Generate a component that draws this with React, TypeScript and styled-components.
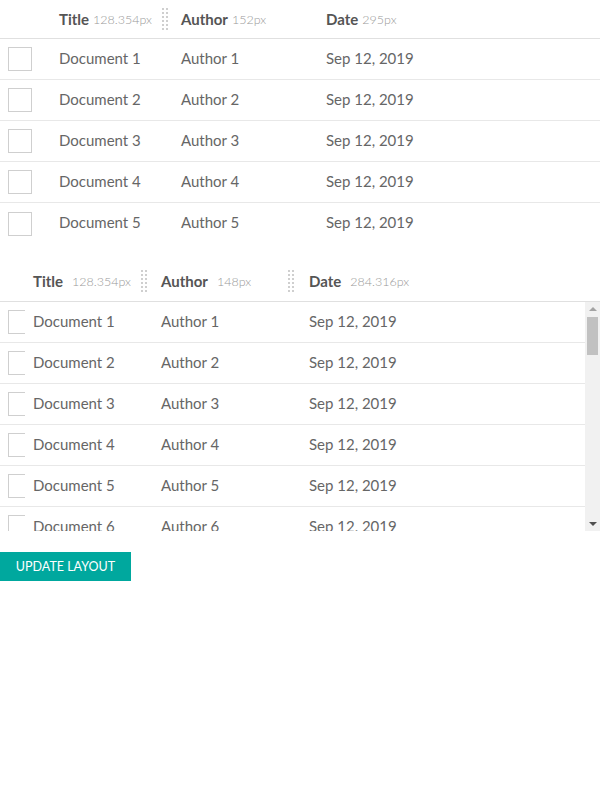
import React from "react";
import styled, { createGlobalStyle } from "styled-components";

const Global = createGlobalStyle`
  html, body { margin: 0; padding: 0; background: #fff; }
  body { font-family: "Lato", "Open Sans", sans-serif; color: #666; }
`;

const Table = styled.div`
  display: flex;
  flex-direction: column;
`;

const HeaderRow = styled.div<{ $cols: string; $h: number }>`
  display: grid;
  grid-template-columns: ${(p) => p.$cols};
  height: ${(p) => p.$h}px;
  align-items: center;
  border-bottom: 1px solid #e0e0e0;
`;

const HeaderCell = styled.div<{ $pr?: number; $gap: number }>`
  display: flex;
  align-items: center;
  height: 100%;
  padding-right: ${(p) => p.$pr ?? 0}px;
  box-sizing: border-box;
  gap: ${(p) => p.$gap}px;
`;

const Label = styled.span`
  font-weight: 700;
  font-size: 15px;
  color: #555;
`;

const Size = styled.span`
  font-size: 12.5px;
  font-weight: 300;
  color: #999;
`;

const Handle = styled.span`
  margin-left: auto;
  width: 2px;
  height: 22px;
  border-left: 2px dotted #cfcfcf;
  border-right: 2px dotted #cfcfcf;
`;

const Row = styled.div<{ $cols: string }>`
  display: grid;
  grid-template-columns: ${(p) => p.$cols};
  height: 41px;
  box-sizing: border-box;
  padding-bottom: 3px;
  align-items: center;
  font-size: 15px;
  color: #666;
  border-bottom: 1px solid #e8e8e8;
  &:last-child { border-bottom: none; }
`;

const Cell = styled.div`
  white-space: nowrap;
`;

const CheckCell = styled.div<{ $w: number }>`
  padding-left: 8px;
  width: ${(p) => p.$w}px;
  box-sizing: border-box;
  overflow: hidden;
  height: 24px;
  margin-top: 3px;
`;

const Check = styled.div`
  width: 24px;
  height: 24px;
  box-sizing: border-box;
  border: 1px solid #cfcfcf;
  background: #fff;
`;

const ScrollFrame = styled.div`
  display: flex;
  height: 229px;
`;

const ScrollBody = styled.div`
  flex: 1;
  overflow: hidden;
`;

const Bar = styled.div`
  width: 15px;
  background: #f1f1f1;
  display: flex;
  flex-direction: column;
  align-items: center;
`;

const Arrow = styled.div<{ $down?: boolean; $color: string }>`
  height: 14px;
  width: 15px;
  display: flex;
  align-items: center;
  justify-content: center;
  &::before {
    content: "";
    width: 0;
    height: 0;
    border-left: 4px solid transparent;
    border-right: 4px solid transparent;
    ${(p) =>
      p.$down
        ? `border-top: 4px solid ${p.$color};`
        : `border-bottom: 4px solid ${p.$color};`}
  }
`;

const Track = styled.div`
  flex: 1;
  width: 100%;
  display: flex;
  justify-content: center;
  padding-top: 1px;
`;

const Thumb = styled.div`
  width: 11px;
  height: 38px;
  background: #c1c1c1;
`;

const Gap = styled.div`
  height: 17px;
`;

const Button = styled.button`
  margin-top: 21px;
  width: 131px;
  height: 29px;
  border: none;
  background: #00a89e;
  color: #fff;
  font-family: "Lato", sans-serif;
  font-size: 12.5px;
  text-transform: uppercase;
  padding: 0;
  cursor: pointer;
  display: block;
`;

const cols1 = "59px 122px 145px 1fr";
const cols2 = "33px 128px 148px 1fr";

const docs = Array.from({ length: 5 }, (_, i) => i + 1);
const docs2 = Array.from({ length: 7 }, (_, i) => i + 1);

export default function App() {
  return (
    <>
      <Global />
      <Table>
        <HeaderRow $cols={cols1} $h={38}>
          <div />
          <HeaderCell $pr={13} $gap={4}>
            <Label>Title</Label>
            <Size>128.354px</Size>
            <Handle />
          </HeaderCell>
          <HeaderCell $gap={4}>
            <Label>Author</Label>
            <Size>152px</Size>
          </HeaderCell>
          <HeaderCell $gap={4}>
            <Label>Date</Label>
            <Size>295px</Size>
          </HeaderCell>
        </HeaderRow>
        <div>
          {docs.map((n) => (
            <Row key={n} $cols={cols1}>
              <CheckCell $w={32}>
                <Check />
              </CheckCell>
              <Cell>Document {n}</Cell>
              <Cell>Author {n}</Cell>
              <Cell>Sep 12, 2019</Cell>
            </Row>
          ))}
        </div>
      </Table>
      <Gap />
      <Table>
        <HeaderRow $cols={cols2} $h={40}>
          <div />
          <HeaderCell $pr={14} $gap={9}>
            <Label>Title</Label>
            <Size>128.354px</Size>
            <Handle />
          </HeaderCell>
          <HeaderCell $pr={15} $gap={9}>
            <Label>Author</Label>
            <Size>148px</Size>
            <Handle />
          </HeaderCell>
          <HeaderCell $gap={9}>
            <Label>Date</Label>
            <Size>284.316px</Size>
          </HeaderCell>
        </HeaderRow>
        <ScrollFrame>
          <ScrollBody>
            {docs2.map((n) => (
              <Row key={n} $cols={cols2}>
                <CheckCell $w={25}>
                  <Check />
                </CheckCell>
                <Cell>Document {n}</Cell>
                <Cell>Author {n}</Cell>
                <Cell>Sep 12, 2019</Cell>
              </Row>
            ))}
          </ScrollBody>
          <Bar>
            <Arrow $color="#a3a3a3" />
            <Track>
              <Thumb />
            </Track>
            <Arrow $down $color="#505050" />
          </Bar>
        </ScrollFrame>
      </Table>
      <Button>Update Layout</Button>
    </>
  );
}
